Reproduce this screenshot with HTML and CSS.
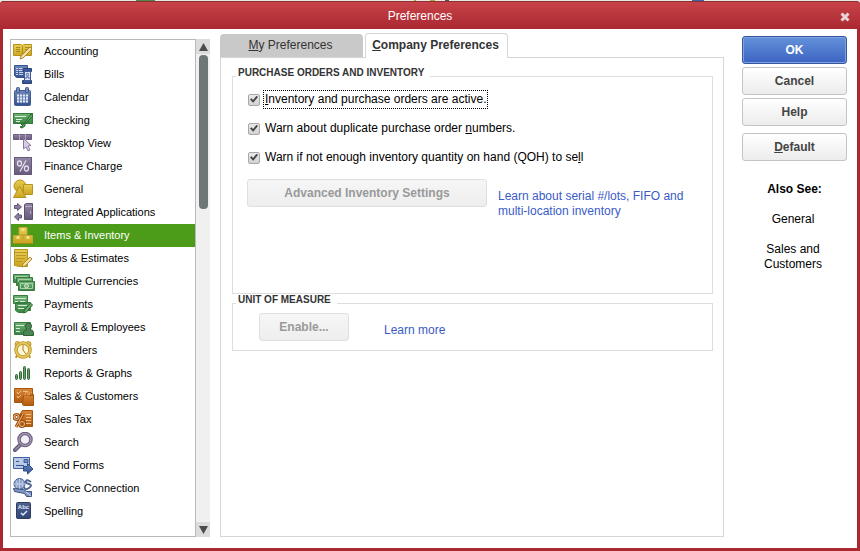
FILE: index.html
```html
<!DOCTYPE html>
<html lang="en">
<head>
<meta charset="utf-8">
<title>Preferences</title>
<link rel="stylesheet" href="styles.css">
</head>
<body>
<svg class="defs" aria-hidden="true">
  <defs>
    <linearGradient id="gold" x1="0" y1="0" x2="0" y2="1"><stop offset="0" stop-color="#e8cf55"/><stop offset="1" stop-color="#caa31c"/></linearGradient>
    <linearGradient id="blue" x1="0" y1="0" x2="0" y2="1"><stop offset="0" stop-color="#6c88c0"/><stop offset="1" stop-color="#34508f"/></linearGradient>
    <linearGradient id="green" x1="0" y1="0" x2="0" y2="1"><stop offset="0" stop-color="#72b276"/><stop offset="1" stop-color="#3a8444"/></linearGradient>
    <linearGradient id="purple" x1="0" y1="0" x2="0" y2="1"><stop offset="0" stop-color="#9385a5"/><stop offset="1" stop-color="#685a7c"/></linearGradient>
    <linearGradient id="orange" x1="0" y1="0" x2="0" y2="1"><stop offset="0" stop-color="#d98637"/><stop offset="1" stop-color="#b05a0e"/></linearGradient>
  </defs>
</svg>
<div class="dialog">
  <header class="titlebar">
    <h1>Preferences</h1>
    <button class="close" type="button" aria-label="Close"><svg width="10" height="10" viewBox="0 0 10 10"><path d="M1.500 1.500l7 7M8.500 1.500l-7 7" stroke="#e9d5d5" stroke-width="3"/></svg></button>
  </header>
  <div class="content">
    <nav class="sidebar" aria-label="Categories">
      <ul class="list">
        <li><a href="#"><svg viewBox="0 0 22 22"><path d="M.5 3.500h8l1 1 1-1h8v11h-8l-1 1-1-1h-8z" fill="url(#gold)" stroke="#b6921f"/><path d="M9.500 5v10M3 6.500h4M3 8.500h4M3 10.500h4M12 6.500h4M12 8.500h3M12 10.500h2" stroke="#a98a20" fill="none"/><path d="M17 6l2 2-9 9-3 1 1-3z" fill="#f5dfa0" stroke="#b08a31"/></svg>Accounting</a></li>
        <li><a href="#"><svg viewBox="0 0 22 22"><path d="M1.500 1.500h13v12h-11l-2-2z" fill="url(#blue)" stroke="#38548f"/><path d="M3 4.500h2M6 4.500h7M3 6.500h2M6 6.500h5M3 8.500h2M6 8.500h4M3 10.500h2M6 10.500h4" stroke="#c4d2ee"/><path d="M10 4.500h8.500v3h-8.500zM9.500 16.500h9v3h-9z" fill="#3c5995" stroke="#28427b"/><path d="M11.500 7.500h6v9h-6z" fill="#dbe4f5" stroke="#3f5c98"/><circle cx="14.500" cy="10.500" r="1.200" fill="none" stroke="#45629f"/><path d="M13 15v-2h3v2" fill="none" stroke="#45629f"/></svg>Bills</a></li>
        <li><a href="#"><svg viewBox="0 0 22 22"><rect x="1.500" y="3.500" width="16" height="15" rx="1" fill="url(#blue)" stroke="#445b8e"/><path d="M4 7.500h11v8h-11z" fill="#6c84b5"/><path d="M4 8.500h11M4 11.500h11M4 14.500h11" stroke="#e7edf8" stroke-width="2" stroke-dasharray="2 1"/><rect x="3.500" y=".5" width="3" height="5" rx="1" fill="#7890bd" stroke="#3c5287"/><rect x="12.500" y=".5" width="3" height="5" rx="1" fill="#7890bd" stroke="#3c5287"/></svg>Calendar</a></li>
        <li><a href="#"><svg viewBox="0 0 22 22"><rect x=".5" y="3.500" width="19" height="10" fill="url(#green)" stroke="#357c3e"/><path d="M2 6.500h11M3 9.500h6M3 11.500h4" stroke="#d9f0d9"/><path d="M18 4l2 2-8 8 0 2-3 2-2-1 3-1-2-2h3z" fill="#63a968" stroke="#226b2b"/></svg>Checking</a></li>
        <li><a href="#"><svg viewBox="0 0 22 22"><path d="M.5 1.500h18v5h-18z" fill="url(#purple)" stroke="#6c5c80"/><path d="M6.500 1v6M12.500 1v6" stroke="#b3a5c0"/><path d="M10.500 5.500l7.500 7-3 .4 2 4-2 1-2-4-2.500 2z" fill="#d9cde4" stroke="#8a77a0"/></svg>Desktop View</a></li>
        <li><a href="#"><svg viewBox="0 0 22 22"><rect x="1.500" y="1.500" width="17" height="17" fill="url(#purple)" stroke="#66587b"/><g fill="none" stroke="#e6deed" stroke-width="1.300"><ellipse cx="6.500" cy="7.500" rx="2" ry="2.500"/><ellipse cx="13.500" cy="12.500" rx="2" ry="2.500"/><path d="M13 4.500l-6 11"/></g></svg>Finance Charge</a></li>
        <li><a href="#"><svg viewBox="0 0 22 22"><circle cx="7" cy="7" r="6" fill="url(#gold)" stroke="#b6921f"/><path d="M10.500 5.500h9v10h-9z" fill="url(#gold)" stroke="#b6921f"/><path d="M6.500 7.500l6.500 11h-12.500z" fill="url(#gold)" stroke="#b6921f"/></svg>General</a></li>
        <li><a href="#"><svg viewBox="0 0 22 22"><path d="M1.500 3.500h3v-2l4 3.500-4 3.500v-2h-3zM8.500 13h-3v-2l-4 4 4 3.500v-2.500h3z" fill="#8b7d9d" stroke="#65577a"/><path d="M11.500 2.500l2-1h6v16h-8z" fill="url(#purple)" stroke="#5e5073"/><path d="M12 4.500h7M17.500 9v3" stroke="#b9acc6"/></svg>Integrated Applications</a></li>
        <li class="selected"><a href="#" aria-current="page"><svg viewBox="0 0 22 22"><path d="M6 2.500h8v7h-8zM.5 10.500h9v8h-9zM10.500 10.500h9v8h-9z" fill="url(#gold)" stroke="#c6a638"/><path d="M8.500 3h3v3h-3zM3.500 11h3v3h-3zM13.500 11h3v3h-3z" fill="#f3df83"/><path d="M0 18.500h20" stroke="#a98816"/></svg>Items &amp; Inventory</a></li>
        <li><a href="#"><svg viewBox="0 0 22 22"><path d="M1.500 1.500h13v17h-8l-5-1z" fill="url(#gold)" stroke="#b6921f"/><path d="M2 4.500h12M3 7.500h10M3 10.500h9M3 13.500h6" stroke="#b8962a"/><path d="M17 9l2 2-7 7-3 1 1-3z" fill="#f5dfa0" stroke="#b08a31"/></svg>Jobs &amp; Estimates</a></li>
        <li><a href="#"><svg viewBox="0 0 22 22"><g fill="url(#green)" stroke="#357c3e"><path d="M.5 3.500h16v8h-16z"/><path d="M3.500 6.500h16v8h-16z"/><path d="M5.500 10.500h16v9h-16z"/></g><path d="M2.500 8v-2.500h12M5.500 11v-2.500h12M7.500 17.500v-5h12v5z" fill="none" stroke="#a5d0a8"/><circle cx="13.500" cy="15" r="2" fill="#79b67e" stroke="#d0e8d0"/></svg>Multiple Currencies</a></li>
        <li><a href="#"><svg viewBox="0 0 22 22"><path d="M.5 1.500h14v8h-14zM2.500 8.500h15v8h-6l-1 2h-5l-3-2z" fill="url(#green)" stroke="#357c3e"/><path d="M2 4.500h11M2 7.500h3M7 7.500h5M5 11.500h9M5 14.500h6" stroke="#d5ecd5"/><path d="M17.500 9l2 2-6 7-3 1 1-3z" fill="#69ab6e" stroke="#26682e"/></svg>Payments</a></li>
        <li><a href="#"><svg viewBox="0 0 22 22"><path d="M1.500 5.500h16v12h-16z" fill="url(#green)" stroke="#357c3e"/><path d="M3 8.500h8M3 11.500h4M3 14.500h4" stroke="#d5ecd5"/><path d="M10.500 18.500v-3q0-2.500 3.500-3-1.500-1.500-1.500-3.500 0-3 3-3t3 3q0 2-1.500 3.500 3.500.5 3.500 3v3z" fill="#4d8454" stroke="#2d6336"/></svg>Payroll &amp; Employees</a></li>
        <li><a href="#"><svg viewBox="0 0 22 22"><circle cx="4.500" cy="4" r="2.500" fill="#e7cb62" stroke="#bc962e"/><circle cx="15.500" cy="4" r="2.500" fill="#e7cb62" stroke="#bc962e"/><path d="M4 15l-1 3M16 15l1 3" stroke="#bc962e" stroke-width="2"/><circle cx="10" cy="10" r="7" fill="#fff6d4" stroke="#b78f25" stroke-width="3.500"/><circle cx="10" cy="10" r="7" fill="none" stroke="#e5c65a" stroke-width="2"/><path d="M10 5v5l3 4" fill="none" stroke="#a67a23"/></svg>Reminders</a></li>
        <li><a href="#"><svg viewBox="0 0 22 22"><g fill="#679d69" stroke="#356b3a"><rect x="2.500" y="11.500" width="2" height="5" rx="1"/><rect x="6.500" y="8.500" width="2" height="8" rx="1"/><rect x="10.500" y="3.500" width="2" height="13" rx="1"/><rect x="14.500" y="5.500" width="2" height="11" rx="1"/></g></svg>Reports &amp; Graphs</a></li>
        <li><a href="#"><svg viewBox="0 0 22 22"><path d="M1.500 2.500h18v14h-18z" fill="url(#orange)" stroke="#a6550d"/><path d="M4 6l1 2 3-3M4 10l1 2 3-3M10 5.500h5" fill="none" stroke="#efc28e"/><path d="M10.500 9.500h9l1-1v11h-10l-1-1z" fill="url(#orange)" stroke="#a6550d"/><path d="M12 10q0-4 2-4t1 4M16 9q1-5 3-2" fill="none" stroke="#e4a35d"/></svg>Sales &amp; Customers</a></li>
        <li><a href="#"><svg viewBox="0 0 22 22"><path d="M9.500 1.500h10v16h-12v-13z" fill="url(#orange)" stroke="#a6550d"/><path d="M13 5.500h5M13 8.500h5M13 11.500h5M13 14.500h5" stroke="#f0c18b"/><g fill="none"><circle cx="3.500" cy="8" r="2.500" stroke="#9b4e0d" stroke-width="3"/><circle cx="9" cy="15" r="2.500" stroke="#9b4e0d" stroke-width="3"/><path d="M10 5l-7 13" stroke="#9b4e0d" stroke-width="3"/><circle cx="3.500" cy="8" r="2.500" stroke="#f1c18a"/><circle cx="9" cy="15" r="2.500" stroke="#f1c18a"/><path d="M10 5l-7 13" stroke="#f1c18a"/></g></svg>Sales Tax</a></li>
        <li><a href="#"><svg viewBox="0 0 22 22"><path d="M8 12l-6 6" stroke="#665879" stroke-width="4" stroke-linecap="round"/><path d="M8 12l-6 6" stroke="#9b8dac" stroke-width="1.500"/><circle cx="12" cy="7.500" r="6" fill="#f1eff5" stroke="#685b7b" stroke-width="3.500"/><circle cx="12" cy="7.500" r="6" fill="none" stroke="#a496b4" stroke-width="1.500"/></svg>Search</a></li>
        <li><a href="#"><svg viewBox="0 0 22 22"><path d="M.5 2.500h16v11h-16z" fill="#b9c9e8" stroke="#40609e"/><path d="M3 6.500h3M3 10.500h8" stroke="#36548f"/><path d="M11 4.500h4v3h-4z" fill="#6f8cc3" stroke="#3f5e9a"/><path d="M10.500 11.500h4v-3l5.500 5.500-5.500 5v-3h-4z" fill="url(#blue)" stroke="#2e4d89"/></svg>Send Forms</a></li>
        <li><a href="#"><svg viewBox="0 0 22 22"><circle cx="6.500" cy="6" r="5.500" fill="#8ca2ca" stroke="#455f92"/><path d="M1 6h11M6.500 1v10M3 2.500q3 3.500 0 7M10 2.500q-3 3.500 0 7" fill="none" stroke="#c3d0e8"/><path d="M18 4q-4-3-5-1t3 3 0 4-5-1" fill="none" stroke="#506792" stroke-width="2"/><path d="M.5 10.500l10 1 3 2h5v5h-5l-2-3-10-2z" fill="#7e97c3" stroke="#3b5281"/><path d="M13 14l5 4" stroke="#d6e0f2"/></svg>Service Connection</a></li>
        <li><a href="#"><svg viewBox="0 0 22 22"><rect x="3.500" y="1.500" width="14" height="16" rx="1" fill="url(#blue)" stroke="#303e5c"/><rect x="4" y="2" width="13" height="15" fill="#2d3d5f" opacity=".5"/><text class="abc" x="10.500" y="7.500" text-anchor="middle">Abc</text><path d="M8 12l2 2 4-4" fill="none" stroke="#e3eafa" stroke-width="1.500"/></svg>Spelling</a></li>
      </ul>
      <div class="scrollbar" aria-hidden="true">
        <span class="arrow"><svg width="9" height="8" viewBox="0 0 9 8"><path d="M4.500 0L9 8H0z" fill="#4c4c4c"/></svg></span>
        <span class="track"><span class="thumb"></span></span>
        <span class="arrow"><svg width="9" height="8" viewBox="0 0 9 8"><path d="M4.500 8L9 0H0z" fill="#4c4c4c"/></svg></span>
      </div>
    </nav>

    <main class="main">
      <div class="tabs" role="tablist">
        <button class="tab" type="button" role="tab" aria-selected="false"><span><u>M</u>y Preferences</span></button>
        <button class="tab active" type="button" role="tab" aria-selected="true"><span><u>C</u>ompany Preferences</span></button>
      </div>
      <section class="panel" role="tabpanel">
        <fieldset class="orders">
          <legend>PURCHASE ORDERS AND INVENTORY</legend>
          <div class="check"><input id="active" type="checkbox" checked><label class="focused" for="active"><u>I</u>nventory and purchase orders are active.</label></div>
          <div class="check"><input id="dup" type="checkbox" checked><label for="dup">Warn about duplicate purchase order <u>n</u>umbers.</label></div>
          <div class="check"><input id="qoh" type="checkbox" checked><label for="qoh">Warn if not enough inventory quantity on hand (QOH) to se<u>l</u>l</label></div>
          <div class="action">
            <button class="btn advanced" type="button" disabled>Advanced Inventory Settings</button>
            <a class="link" href="#">Learn about serial #/lots, FIFO and multi-location inventory</a>
          </div>
        </fieldset>
        <fieldset class="units">
          <legend>UNIT OF MEASURE</legend>
          <div class="action">
            <button class="btn enable" type="button" disabled>Enable...</button>
            <a class="link" href="#">Learn more</a>
          </div>
        </fieldset>
      </section>
    </main>

    <aside class="side">
      <div class="buttons">
        <button class="btn primary" type="button">OK</button>
        <button class="btn" type="button">Cancel</button>
        <button class="btn" type="button">Help</button>
      </div>
      <button class="btn" type="button"><span><u>D</u>efault</span></button>
      <h2>Also See:</h2>
      <a href="#">General</a>
      <a href="#">Sales and Customers</a>
    </aside>
  </div>
</div>
</body>
</html>
```
FILE: styles.css
```css
* { box-sizing: border-box; }

body {
  margin: 0;
  min-height: 100vh;
  display: flex;
  padding-top: 1px;
  background: linear-gradient(90deg, #e8e8e4 136px, #4b8b4b 136px 155px, #e8e8e4 155px 414px, #a9a548 414px 416px, #e8e8e4 416px 430px, #b5a93c 430px 435px, #e8e8e4 435px 445px, #555 445px 449px, #e8e8e4 449px 692px, #3a66b0 692px 704px, #e8e8e4 704px);
  font: 12px/15px "Liberation Sans", Arial, sans-serif;
  color: #000;
}

button, input { font: inherit; }
u { text-underline-offset: 1px; }
a { color: inherit; text-decoration: none; }
.defs { position: absolute; width: 0; height: 0; }

.dialog {
  flex: 1;
  display: flex;
  flex-direction: column;
  border: 3px solid #a92832;
  border-top: 0;
  border-radius: 4px 4px 0 0;
  background: #a92832;
}

.titlebar {
  display: flex;
  align-items: center;
  height: 28px;
  margin: 0 -3px;
  padding: 2px 10px 0 0;
  border-top: 1px solid #8f2f32;
  border-radius: 4px 4px 0 0;
  background: linear-gradient(#c84349, #aa2831);
}
.titlebar h1 {
  flex: 1;
  margin: 0;
  font-size: 12px;
  font-weight: normal;
  text-align: center;
  color: #fff;
}
.close {
  display: flex;
  padding: 0;
  border: 0;
  background: none;
}

.content {
  flex: 1;
  display: flex;
  padding: 4px 10px 11px 7px;
  background: #fff;
}

.sidebar {
  display: flex;
  width: 200px;
  margin: 6px 10px 0 0;
}
.list {
  flex: 1;
  margin: 0;
  padding: 0;
  list-style: none;
  border: 1px solid #b9b9b9;
  font-size: 11px;
}
.list a {
  display: flex;
  align-items: center;
  gap: 9px;
  height: 23px;
  padding-left: 2px;
}
.list svg { width: 22px; height: 22px; }
.list .selected { background: #4c9c19; color: #fff; }
.abc { font: bold 6px "Liberation Sans", Arial, sans-serif; fill: #e3eafa; }

.scrollbar {
  display: flex;
  flex-direction: column;
  width: 14px;
  background: #f0f0f0;
}
.arrow {
  display: flex;
  align-items: center;
  justify-content: center;
  height: 15px;
  background: #dcdcdc;
}
.track { flex: 1; padding: 1px 2px 1px 3px; }
.thumb {
  display: block;
  height: 33%;
  border-radius: 4px;
  background: #6f7676;
}

.main {
  flex: 1;
  display: flex;
  flex-direction: column;
}
.tabs {
  display: flex;
  align-items: flex-end;
  gap: 2px;
}
.tab {
  width: 143px;
  height: 23px;
  padding: 0 2px 0 0;
  border: 0;
  border-radius: 4px 4px 0 0;
  background: #c9c9c9;
  color: #333;
}
.tab.active {
  position: relative;
  height: 25px;
  margin-bottom: -1px;
  padding-bottom: 2px;
  border: 1px solid #d6d6d6;
  border-bottom: 0;
  background: #fff;
  font-weight: bold;
}
.panel {
  flex: 1;
  padding: 9px 10px 0 11px;
  border: 1px solid #d6d6d6;
}

fieldset {
  min-width: 0;
  margin: 0;
  padding: 0 0 0 14px;
  border: 1px solid #dedede;
}
legend {
  margin-left: -11px;
  padding: 0 6px 6px 2px;
  font-size: 10px;
  font-weight: bold;
  line-height: 12px;
  color: #333;
}
.orders { padding-bottom: 74px; }
.units { padding: 1px 0 9px 26px; }
.units legend { margin-left: -23px; }

.check {
  display: flex;
  align-items: center;
  gap: 4px;
  height: 29px;
  padding-left: 1px;
}
.check input {
  appearance: none;
  display: grid;
  place-items: center;
  width: 12px;
  height: 12px;
  margin: 0;
  border: 1px solid #a8a8a8;
  border-radius: 2px;
  background: linear-gradient(#e9e9e9, #d2d2d2);
}
.check input:checked::before {
  content: "";
  width: 8px;
  height: 8px;
  background: #444;
  clip-path: polygon(0 50%, 18% 34%, 38% 56%, 82% 4%, 100% 18%, 40% 92%);
}
.check label { padding: 1px; }
.check .focused { outline: 1px dotted #000; }

.action { display: flex; gap: 11px; }
.orders .action { padding-top: 7px; }
.action .link {
  max-width: 200px;
  padding-top: 10px;
  color: #3a5bc7;
}
.units .action { gap: 35px; }

.btn {
  height: 28px;
  padding: 0;
  border: 1px solid #c4c4c4;
  border-radius: 3px;
  background: linear-gradient(#fff, #ececec);
  font-weight: bold;
  color: #444;
}
.btn:disabled {
  border-color: #dfdfdf;
  background: linear-gradient(#f6f6f6, #eee);
  color: #999;
}
.btn.primary {
  border-color: #34549c;
  box-shadow: inset 0 0 0 1px #7fa3e2;
  background: linear-gradient(#6492da, #3c63c2);
  color: #fff;
}
.advanced { width: 240px; }
.enable { width: 90px; }

.side {
  display: flex;
  flex-direction: column;
  width: 105px;
  margin-left: 18px;
  padding-top: 3px;
  text-align: center;
}
.buttons {
  display: flex;
  flex-direction: column;
  gap: 3px;
  margin-bottom: 7px;
}
.side h2 {
  margin: 21px 0 0;
  font-size: 12px;
}
.side a {
  margin-top: 15px;
  padding: 0 18px 0 15px;
}
```
